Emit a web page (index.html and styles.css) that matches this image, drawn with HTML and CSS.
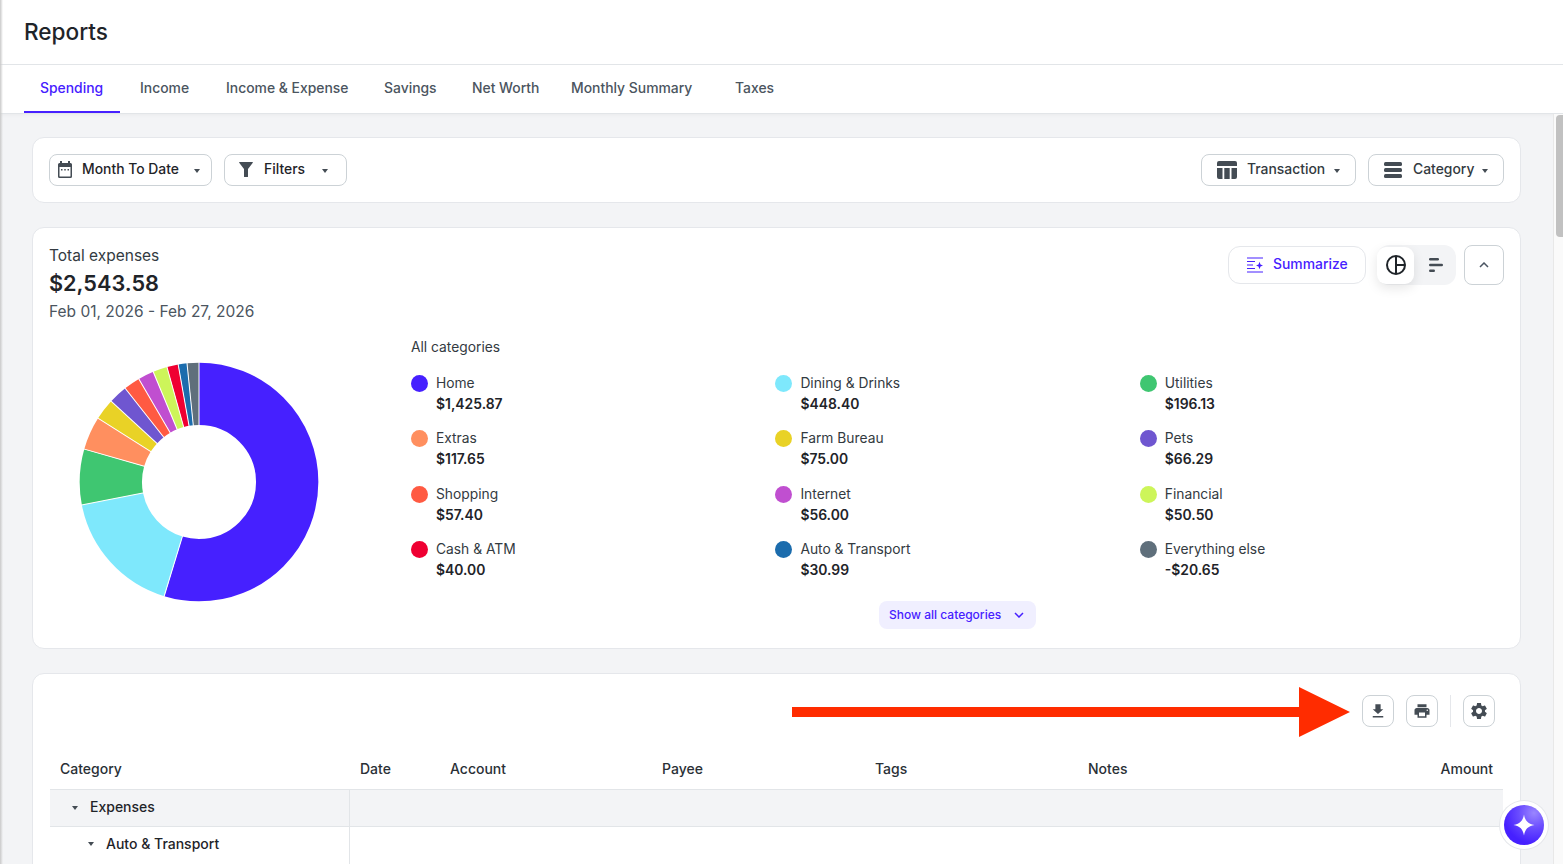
FILE: index.html
```html
<!DOCTYPE html>
<html lang="en">
<head>
<meta charset="utf-8">
<title>Reports</title>
<link rel="stylesheet" href="styles.css">
</head>
<body>
<div class="app">
  <header class="page-head"><h1>Reports</h1></header>
  <nav class="tabs">
    <a class="tab active">Spending</a>
    <a class="tab">Income</a>
    <a class="tab">Income &amp; Expense</a>
    <a class="tab">Savings</a>
    <a class="tab">Net Worth</a>
    <a class="tab">Monthly Summary</a>
    <a class="tab">Taxes</a>
  </nav>
  <main class="main">
    <section class="card toolbar">
      <button class="btn btn-month">
        <svg class="ic" viewBox="0 0 16 17" width="16" height="17"><path class="fill" d="M3 0h2v2h6V0h2v2h.5A1.500 1.500 0 0 1 15 3.500v12a1.500 1.500 0 0 1-1.500 1.500h-11A1.500 1.500 0 0 1 1 15.500v-12A1.500 1.500 0 0 1 2.500 2H3zM2.500 6v9a.5.500 0 0 0 .5.500h10a.5.500 0 0 0 .5-.5V6z"/><rect class="fill" x="4" y="8" width="1.500" height="1.500"/><rect class="fill" x="7.250" y="8" width="1.500" height="1.500"/><rect class="fill" x="10.500" y="8" width="1.500" height="1.500"/></svg>
        <span class="btn-label">Month To Date</span><i class="caret"></i>
      </button>
      <button class="btn btn-filters">
        <svg class="ic" viewBox="0 0 14 15" width="14" height="15"><path class="fill" d="M.6 0h12.800a.5.500 0 0 1 .4.8L9 7v7.500a.5.500 0 0 1-.5.500h-3a.5.500 0 0 1-.5-.5V7L.2.8A.5.500 0 0 1 .6 0z"/></svg>
        <span class="btn-label">Filters</span><i class="caret"></i>
      </button>
      <span class="spacer"></span>
      <button class="btn btn-trans">
        <svg class="ic" viewBox="0 0 20 18" width="20" height="18"><path class="fill" d="M2 0h16a2 2 0 0 1 2 2v3H0V2a2 2 0 0 1 2-2zM0 7h5.500v11H2a2 2 0 0 1-2-2zM7.300 7h5.400v11H7.300zM14.500 7H20v9a2 2 0 0 1-2 2h-3.500z"/></svg>
        <span class="btn-label">Transaction</span><i class="caret"></i>
      </button>
      <button class="btn btn-cat">
        <svg class="ic" viewBox="0 0 18 16" width="18" height="16"><rect class="fill" width="18" height="4" rx="1.500"/><rect class="fill" y="6" width="18" height="4" rx="1.500"/><rect class="fill" y="12" width="18" height="4" rx="1.500"/></svg>
        <span class="btn-label">Category</span><i class="caret"></i>
      </button>
    </section>

    <section class="card overview">
      <div class="overview-top">
        <div class="totals">
          <div class="totals-label">Total expenses</div>
          <div class="totals-amount">$2,543.58</div>
          <div class="totals-range">Feb 01, 2026 - Feb 27, 2026</div>
        </div>
        <div class="overview-actions">
          <button class="summarize">
            <svg viewBox="0 0 16 16" width="16" height="16" class="ic"><path d="M0 1h16M0 4.500h8M0 8h6M0 11.500h8M0 15h16" fill="none" stroke="#4620ff" stroke-width="1.200"/><path d="M12.500 4.800l1 2.700 2.500 1-2.500 1-1 2.700-1-2.700-2.500-1 2.500-1z" fill="#4620ff"/></svg>
            Summarize
          </button>
          <div class="toggle">
            <span class="toggle-item on">
              <svg viewBox="0 0 20 20" width="20" height="20"><circle cx="10" cy="10" r="9" fill="none" stroke="#1f2429" stroke-width="2"/><path d="M10 1v18M10 10h9" fill="none" stroke="#1f2429" stroke-width="2"/></svg>
            </span>
            <span class="toggle-item">
              <svg viewBox="0 0 14 14" width="14" height="14"><rect class="fill" y="0" width="10" height="2.500" rx="1.200"/><rect class="fill" y="5.700" width="14" height="2.500" rx="1.200"/><rect class="fill" y="11.500" width="6" height="2.500" rx="1.200"/></svg>
            </span>
          </div>
          <button class="collapse">
            <svg viewBox="0 0 10 6" width="10" height="6"><path d="M1 5l4-4 4 4" fill="none" stroke="#4b5563" stroke-width="1.500"/></svg>
          </button>
        </div>
      </div>
      <div class="chart-row">
        <svg class="donut" viewBox="-120 -120 240 240" width="240" height="240">
          <g class="slices">
            <circle class="slice" r="88.200" pathLength="360" stroke="#4620ff" stroke-dasharray="196.97 360" stroke-dashoffset="0"/>
            <circle class="slice" r="88.200" pathLength="360" stroke="#7ee8fc" stroke-dasharray="61.94 360" stroke-dashoffset="-196.97"/>
            <circle class="slice" r="88.200" pathLength="360" stroke="#3fc671" stroke-dasharray="27.1 360" stroke-dashoffset="-258.91"/>
            <circle class="slice" r="88.200" pathLength="360" stroke="#ff8f5f" stroke-dasharray="16.25 360" stroke-dashoffset="-286.01"/>
            <circle class="slice" r="88.200" pathLength="360" stroke="#e9d226" stroke-dasharray="10.36 360" stroke-dashoffset="-302.26"/>
            <circle class="slice" r="88.200" pathLength="360" stroke="#6f56d0" stroke-dasharray="9.16 360" stroke-dashoffset="-312.62"/>
            <circle class="slice" r="88.200" pathLength="360" stroke="#ff5a42" stroke-dasharray="7.93 360" stroke-dashoffset="-321.78"/>
            <circle class="slice" r="88.200" pathLength="360" stroke="#c04fd0" stroke-dasharray="7.74 360" stroke-dashoffset="-329.71"/>
            <circle class="slice" r="88.200" pathLength="360" stroke="#cdf55a" stroke-dasharray="6.98 360" stroke-dashoffset="-337.44"/>
            <circle class="slice" r="88.200" pathLength="360" stroke="#ef0032" stroke-dasharray="5.53 360" stroke-dashoffset="-344.42"/>
            <circle class="slice" r="88.200" pathLength="360" stroke="#1b6cad" stroke-dasharray="4.28 360" stroke-dashoffset="-349.95"/>
            <circle class="slice" r="88.200" pathLength="360" stroke="#5f6f7b" stroke-dasharray="5.77 360" stroke-dashoffset="-354.23"/>
          </g>
          <g class="seps">
            <line y1="-56" y2="-121"/>
            <line y1="-56" y2="-121" transform="rotate(196.97)"/>
            <line y1="-56" y2="-121" transform="rotate(258.91)"/>
            <line y1="-56" y2="-121" transform="rotate(286.01)"/>
            <line y1="-56" y2="-121" transform="rotate(302.26)"/>
            <line y1="-56" y2="-121" transform="rotate(312.62)"/>
            <line y1="-56" y2="-121" transform="rotate(321.78)"/>
            <line y1="-56" y2="-121" transform="rotate(329.71)"/>
            <line y1="-56" y2="-121" transform="rotate(337.44)"/>
            <line y1="-56" y2="-121" transform="rotate(344.42)"/>
            <line y1="-56" y2="-121" transform="rotate(349.95)"/>
            <line y1="-56" y2="-121" transform="rotate(354.23)"/>
          </g>
        </svg>
        <div class="legend">
          <div class="legend-title">All categories</div>
          <div class="legend-grid">
            <div class="item"><i class="dot" style="background:#4620ff"></i><div class="name">Home</div><div class="val">$1,425.87</div></div>
            <div class="item"><i class="dot" style="background:#7ee8fc"></i><div class="name">Dining &amp; Drinks</div><div class="val">$448.40</div></div>
            <div class="item"><i class="dot" style="background:#3fc671"></i><div class="name">Utilities</div><div class="val">$196.13</div></div>
            <div class="item"><i class="dot" style="background:#ff8f5f"></i><div class="name">Extras</div><div class="val">$117.65</div></div>
            <div class="item"><i class="dot" style="background:#e9d226"></i><div class="name">Farm Bureau</div><div class="val">$75.00</div></div>
            <div class="item"><i class="dot" style="background:#6f56d0"></i><div class="name">Pets</div><div class="val">$66.29</div></div>
            <div class="item"><i class="dot" style="background:#ff5a42"></i><div class="name">Shopping</div><div class="val">$57.40</div></div>
            <div class="item"><i class="dot" style="background:#c04fd0"></i><div class="name">Internet</div><div class="val">$56.00</div></div>
            <div class="item"><i class="dot" style="background:#cdf55a"></i><div class="name">Financial</div><div class="val">$50.50</div></div>
            <div class="item"><i class="dot" style="background:#ef0032"></i><div class="name">Cash &amp; ATM</div><div class="val">$40.00</div></div>
            <div class="item"><i class="dot" style="background:#1b6cad"></i><div class="name">Auto &amp; Transport</div><div class="val">$30.99</div></div>
            <div class="item"><i class="dot" style="background:#5f6f7b"></i><div class="name">Everything else</div><div class="val">-$20.65</div></div>
          </div>
          <div class="show-wrap">
            <button class="show-all">Show all categories
              <svg viewBox="0 0 10 6" width="10" height="6"><path d="M1 1l4 4 4-4" fill="none" stroke="#4620ff" stroke-width="1.500"/></svg>
            </button>
          </div>
        </div>
      </div>
    </section>

    <section class="card report">
      <div class="report-tools">
        <button class="icon-btn">
          <svg viewBox="0 0 24 24" width="18" height="18"><path class="fill" d="M15.500 9.500H19L12 16 5 9.500h3.500V3h7zM5 18.800h14v2H5z"/></svg>
        </button>
        <button class="icon-btn">
          <svg viewBox="0 0 24 24" width="18" height="18"><path class="fill" d="M19 8H5c-1.660 0-3 1.340-3 3v6h4v4h12v-4h4v-6c0-1.660-1.340-3-3-3zm-3 11H8v-5h8v5zm3-7c-.55 0-1-.45-1-1s.45-1 1-1 1 .45 1 1-.45 1-1 1zm-1-9H6v4h12V3z"/></svg>
        </button>
        <span class="tool-div"></span>
        <button class="icon-btn">
          <svg viewBox="0 0 24 24" width="20" height="20"><path class="fill" d="M19.140 12.940c.04-.3.06-.61.06-.94 0-.32-.02-.64-.07-.94l2.030-1.580c.18-.14.23-.41.12-.61l-1.920-3.320c-.12-.22-.37-.29-.59-.22l-2.390.96c-.5-.38-1.030-.7-1.620-.94l-.36-2.540c-.04-.24-.24-.41-.48-.41h-3.840c-.24 0-.43.17-.47.41l-.36 2.540c-.59.24-1.130.57-1.620.94l-2.390-.96c-.22-.08-.47 0-.59.22L2.740 8.870c-.12.21-.08.47.12.61l2.030 1.580c-.05.3-.09.63-.09.94s.02.64.07.94l-2.030 1.580c-.18.14-.23.41-.12.61l1.920 3.320c.12.22.37.29.59.22l2.390-.96c.5.38 1.030.7 1.620.94l.36 2.540c.05.24.24.41.48.41h3.840c.24 0 .44-.17.47-.41l.36-2.540c.59-.24 1.130-.56 1.620-.94l2.390.96c.22.08.47 0 .59-.22l1.920-3.320c.12-.22.07-.47-.12-.61l-2.010-1.580zM12 15.600c-1.980 0-3.600-1.620-3.600-3.600s1.620-3.600 3.600-3.600 3.600 1.620 3.600 3.600-1.620 3.600-3.600 3.600z"/></svg>
        </button>
      </div>
      <div class="table">
        <div class="tr th">
          <div class="td">Category</div><div class="td">Date</div><div class="td">Account</div><div class="td">Payee</div><div class="td">Tags</div><div class="td">Notes</div><div class="td right">Amount</div>
        </div>
        <div class="tr group">
          <div class="td cat lvl1"><i class="caret small"></i>Expenses</div><div class="td span"></div>
        </div>
        <div class="tr sub">
          <div class="td cat lvl2"><i class="caret small"></i>Auto &amp; Transport</div><div class="td span"></div>
        </div>
      </div>
    </section>
  </main>

  <svg class="arrow" viewBox="0 0 558 50" width="558" height="50"><path d="M0 20h507V0l51 25-51 25V30H0z" fill="#ff2c00"/></svg>
  <div class="scrollbar"><span class="thumb"></span></div>
  <button class="fab">
    <svg viewBox="0 0 24 24" width="24" height="24"><path d="M12 1.500c1.100 6.200 3.800 9.300 10.500 10.500-6.700 1.200-9.400 4.300-10.500 10.500C10.900 16.300 8.200 13.200 1.500 12 8.200 10.800 10.900 7.700 12 1.500z" fill="#fff"/></svg>
  </button>
</div>
</body>
</html>
```

FILE: styles.css
```css
* { box-sizing: border-box; }
html, body { margin: 0; height: 100%; overflow: hidden; }
body { font-family: Inter, "Noto Sans", "Liberation Sans", sans-serif; color: #1f2429; background: #fff; }
button { font: inherit; color: inherit; background: #fff; cursor: pointer; padding: 0; text-align: left; }
.fill { fill: #444c54; }

.app { position: relative; width: 1563px; height: 864px; overflow: hidden; }
.app::before { content: ""; position: absolute; left: 0; top: 0; bottom: 0; width: 3px; background: linear-gradient(90deg, #c9c9c9, rgba(220,220,220,0)); z-index: 3; }

.page-head { height: 65px; display: flex; align-items: center; padding: 0 24px 2px; border-bottom: 1px solid #e2e5e8; }
.page-head h1 { margin: 0; font-size: 22.600px; font-weight: 550; }

.tabs { display: grid; grid-template-columns: 100px 86px 158px 88px 99px 164px 100px; margin-left: 24px; height: 48px; }
.tab { display: flex; align-items: center; padding: 0 0 1px 16px; font-size: 13.900px; font-weight: 550; color: #4b5560; white-space: nowrap; height: 48px; border-bottom: 2px solid transparent; }
.tab.active { color: #4620ff; border-bottom-color: #4620ff; margin-right: 4px; }

.main { background: #f3f4f6; height: 751px; padding: 23px 42px 0 32px; border-top: 1px solid #e2e5e8; overflow: hidden; box-shadow: inset 0 5px 5px -5px rgba(0,0,0,.06); }
.card { background: #fff; border: 1px solid #e5e7eb; border-radius: 12px; }

.toolbar { display: flex; align-items: center; height: 66px; padding: 0 16px; gap: 12px; }
.spacer { flex: 1; }
.btn { display: flex; align-items: center; height: 32px; padding-bottom: 1px; border: 1px solid #ccd2d6; border-radius: 8px; font-size: 13.900px; font-weight: 550; white-space: nowrap; }
.btn .btn-label { padding-bottom: 2px; }
.btn-month { width: 163px; padding-left: 7px; }
.btn-filters { width: 123px; padding-left: 14px; }
.btn-trans { width: 155px; padding-left: 15px; }
.btn-cat { width: 136px; padding-left: 15px; }
.ic { flex: none; }
.btn-month .btn-label { margin-left: 9px; width: 112px; }
.btn-filters .btn-label { margin-left: 11px; width: 58px; }
.btn-trans .btn-label { margin-left: 10px; width: 87px; color: #333a41; }
.btn-cat .btn-label { margin-left: 11px; width: 69px; color: #333a41; }
.caret { display: block; width: 0; height: 0; border-left: 3px solid transparent; border-right: 3px solid transparent; border-top: 4px solid #444c54; margin-top: 2px; }
.caret.small { margin: 2px 0 0; }

.overview { margin-top: 24px; height: 422px; padding: 16px 16px 0; }
.overview-top { display: flex; justify-content: space-between; height: 93px; }
.totals { padding-top: 1px; }
.totals-label { font-size: 15.500px; line-height: 22px; color: #333a41; }
.totals-amount { font-size: 21.700px; font-weight: 600; line-height: 30px; margin-top: 1px; }
.totals-range { font-size: 15.500px; line-height: 22px; margin-top: 3px; color: #4b5560; }
.overview-actions { display: flex; align-items: flex-start; margin-top: 1px; height: 40px; }
.summarize { display: flex; align-items: center; gap: 10px; width: 138px; height: 38px; margin-top: 1px; padding: 0 0 2px 18px; border: 1px solid #e5e7eb; border-radius: 12px; color: #4620ff; font-size: 13.900px; font-weight: 550; white-space: nowrap; }
.summarize .ic { margin-top: 2px; }
.toggle { display: flex; align-items: center; width: 79px; height: 40px; margin-left: 11px; background: #f3f4f6; border-radius: 12px; }
.toggle-item { display: flex; align-items: center; justify-content: center; width: 37px; height: 37px; }
.toggle-item.on { background: #fff; border-radius: 9px; box-shadow: 0 4px 12px rgba(0,0,0,.1); }
.toggle-item + .toggle-item { margin-left: 3px; }
.collapse { display: flex; align-items: center; justify-content: center; width: 40px; height: 40px; margin-left: 8px; border: 1px solid #ccd2d6; border-radius: 8px; }

.chart-row { display: flex; align-items: flex-start; }
.donut { flex: none; margin: 25px 0 0 30px; }
.slices { transform: rotate(-90deg); }
.slice { fill: none; stroke-width: 62.300; }
.seps line { stroke: #fff; stroke-width: 1; }
.legend { flex: 1; margin-left: 92px; }
.legend-title { font-size: 13.800px; line-height: 20px; color: #333a41; }
.legend-grid { display: grid; grid-template-columns: repeat(3, 364.400px); row-gap: 14.300px; margin-top: 16px; }
.item { display: grid; grid-template-columns: 25px 1fr; align-items: center; }
.dot { width: 17px; height: 17px; border-radius: 50%; display: block; }
.name { font-size: 13.800px; line-height: 21px; color: #333a41; white-space: nowrap; }
.val { grid-column: 2; font-size: 13.900px; line-height: 20px; font-weight: 600; white-space: nowrap; }
.show-wrap { display: flex; justify-content: center; margin-top: 21px; }
.show-all { display: flex; align-items: center; justify-content: space-between; width: 157px; height: 28px; padding: 0 12px 0 10px; background: #f0efff; border: 0; border-radius: 8px; color: #4620ff; font-size: 12px; font-weight: 550; white-space: nowrap; }

.report { margin-top: 24px; height: 300px; padding: 21px 17px 0 17px; }
.report-tools { display: flex; justify-content: flex-end; align-items: center; height: 32px; padding-right: 8px; }
.icon-btn { display: flex; align-items: center; justify-content: center; width: 32px; height: 32px; margin-left: 12px; border: 1px solid #ccd2d6; border-radius: 8px; }
.tool-div { width: 1px; height: 32px; background: #e5e7eb; margin-left: 12px; }

.table { margin-top: 22px; font-size: 14px; font-weight: 550; }
.tr { display: grid; grid-template-columns: 300px 90px 212px 213px 213px 213px 212px; }
.th { height: 41px; padding-bottom: 2px; border-bottom: 1px solid #e2e5e8; align-items: center; }
.th .td { padding-left: 10px; white-space: nowrap; color: #2a3036; }
.th .right { padding: 0 10px 0 0; text-align: right; }
.group { background: #f3f4f6; height: 37px; border-bottom: 1px solid #e2e5e8; }
.sub { height: 37px; }
.cat { display: flex; align-items: center; padding-bottom: 3px; border-right: 1px solid #e2e5e8; white-space: nowrap; }
.lvl1 { padding-left: 22px; }
.lvl2 { padding-left: 38px; padding-bottom: 5px; }
.cat .caret { margin-right: 12px; }
.span { grid-column: 2 / -1; }

.arrow { position: absolute; left: 792px; top: 687px; z-index: 2; }
.scrollbar { position: absolute; right: 0; top: 114px; bottom: 0; width: 10px; background: #fafafa; border-left: 1px solid #e8e8e8; z-index: 2; }
.thumb { position: absolute; left: 2px; right: 0; top: 1px; height: 122px; background: #c1c1c1; border-radius: 4px 0 0 4px; }
.fab { position: absolute; left: 1504px; top: 805px; width: 40px; height: 40px; display: flex; align-items: center; justify-content: center; border-radius: 50%; border: 0; background: radial-gradient(circle at 75% 20%, #9a86ff 0, #6a4cff 35%, #4620ff 70%); box-shadow: 0 0 0 4px #fff, 0 0 0 5px #e5e7eb; z-index: 4; }
```
